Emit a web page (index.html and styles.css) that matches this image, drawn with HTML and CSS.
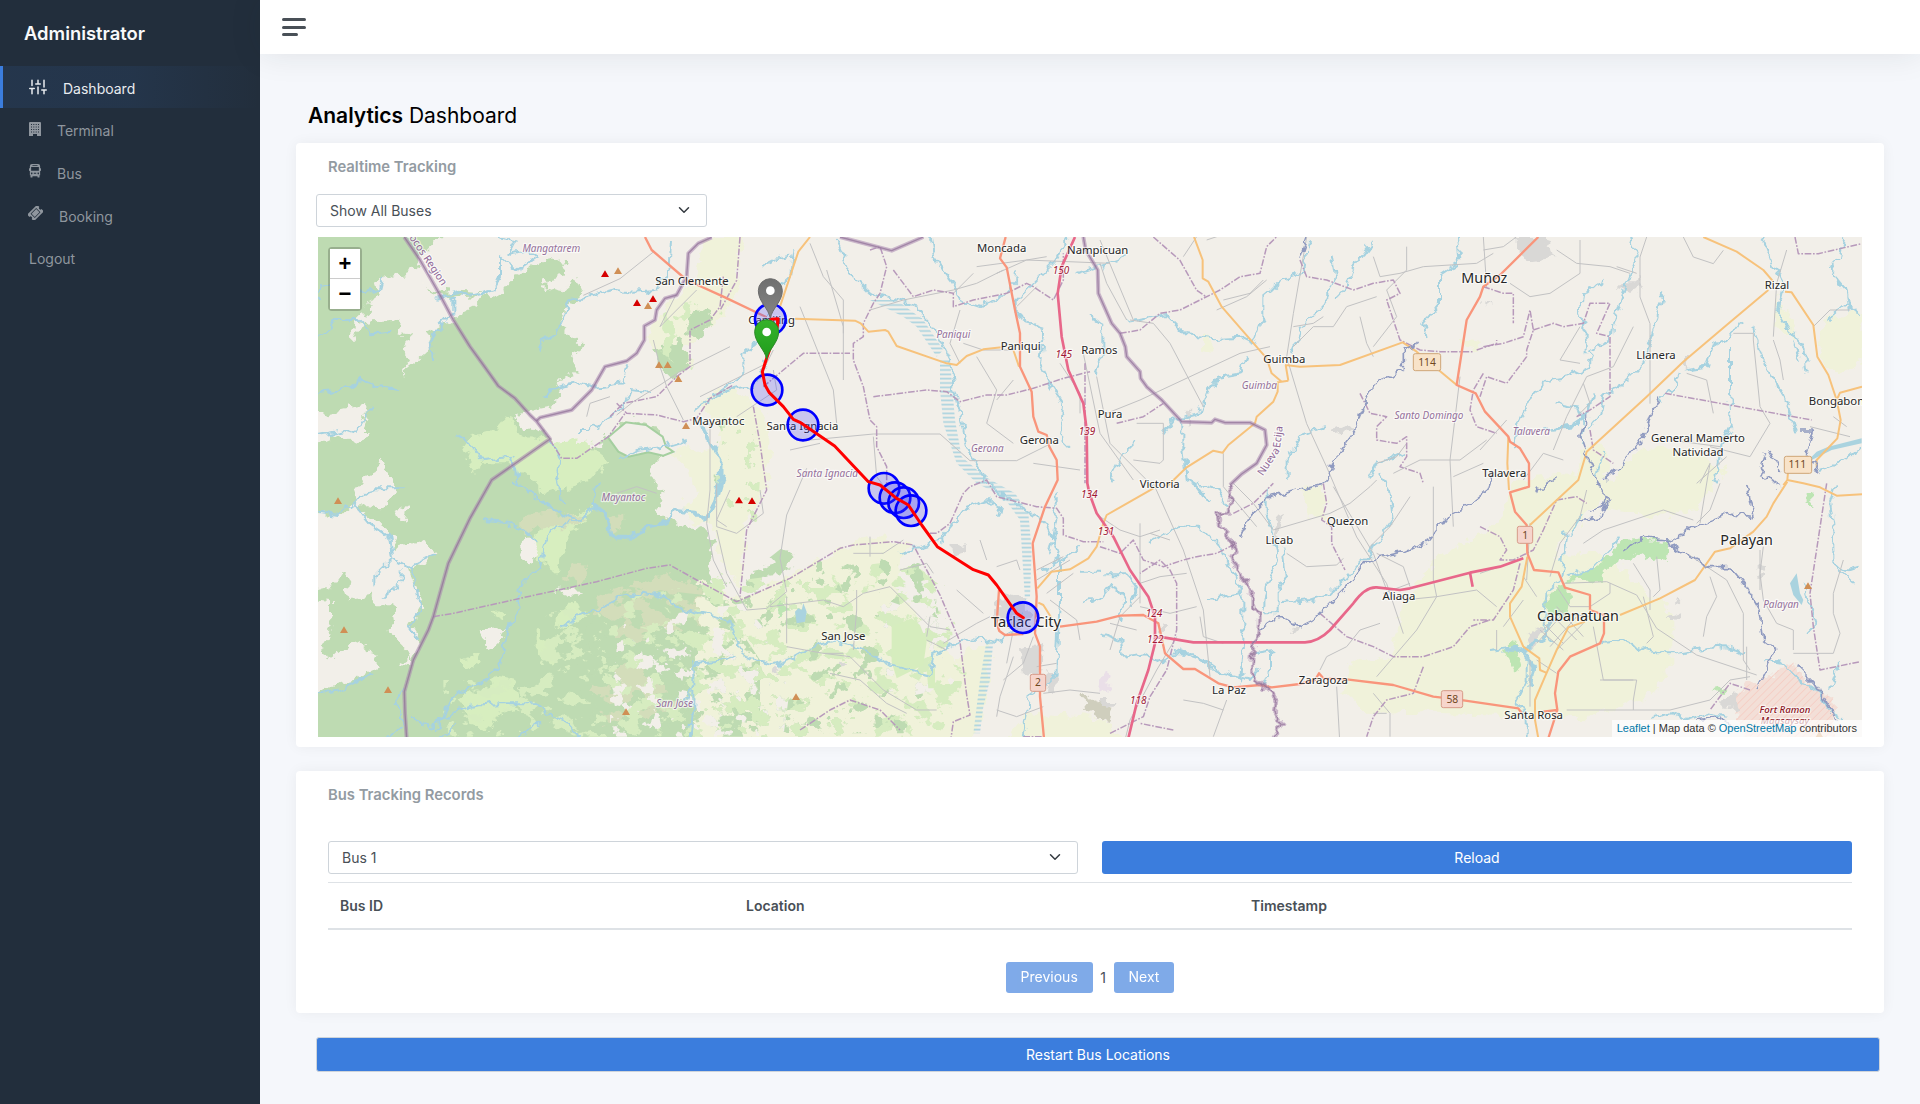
FILE: index.html
```html
<!DOCTYPE html>
<html lang="en">
<head>
<meta charset="utf-8">
<title>Analytics Dashboard</title>
<link rel="stylesheet" href="styles.css">
</head>
<body>
<div class="wrapper">
  <nav class="sidebar">
    <a class="brand">Administrator</a>
    <a class="side-link active"><svg class="ic-sliders" viewBox="0 0 24 24"><path d="M4 21v-7M4 10V3M12 21v-9M12 8V3M20 21v-5M20 12V3M1 14h6M9 8h6M17 16h6"/></svg><span>Dashboard</span></a>
    <a class="side-link terminal"><svg class="ic-fill" viewBox="0 0 12 14"><path fill-rule="evenodd" d="M1 0h10a1 1 0 0 1 1 1v13H8v-2H4v2H0V1a1 1 0 0 1 1-1zM2 2v1h1V2zm2.300 0v1h1V2zm2.400 0v1h1V2zM9 2v1h1V2zM2 4.500v1h1v-1zm2.300 0v1h1v-1zm2.400 0v1h1v-1zm2.300 0v1h1v-1zM2 7v1h1V7zm2.300 0v1h1V7zm2.400 0v1h1V7zM9 7v1h1V7zM2 9.500v1h1v-1zm2.300 0v1h1v-1zm2.400 0v1h1v-1zm2.300 0v1h1v-1z"/></svg><span>Terminal</span></a>
    <a class="side-link bus"><svg class="ic-fill" viewBox="0 0 14 15" preserveAspectRatio="none"><path fill-rule="evenodd" d="M3.500 0h7A2.500 2.500 0 0 1 13 2.500V4.500h.6a.4.4 0 0 1 .4.400v2a.6.600 0 0 1-1 .400V12h-.7v1.800a.7.700 0 0 1-.7.700h-1a.7.700 0 0 1-.7-.7V13H4.100v.8a.7.700 0 0 1-.7.700h-1a.7.700 0 0 1-.7-.7V12H1V7.300a.6.600 0 0 1-1-.4v-2a.4.400 0 0 1 .4-.4H1v-2A2.500 2.500 0 0 1 3.500 0zM4 1.300v.8h6v-.8zM2.500 3.300v4h9v-4zM3.200 9.200a.9.900 0 1 0 .01 0zM5.600 9.500v1h2.800v-1zM10.800 9.200a.9.900 0 1 0 .01 0z"/></svg><span>Bus</span></a>
    <a class="side-link booking"><svg class="ic-fill" viewBox="0 0 15 14"><g transform="rotate(-45 7.500 7)"><path fill-rule="evenodd" d="M.5 2.300h14v3.200a1.500 1.500 0 0 0 0 3v3.200H.5V8.500a1.500 1.500 0 0 0 0-3zM3.500 4v6h8V4zM4.200 4.700h6.600v4.600H4.200z"/></g></svg><span>Booking</span></a>
    <a class="side-link logout"><span>Logout</span></a>
  </nav>
  <div class="main">
    <header class="navbar"><div class="burger"><i></i><i></i><i></i></div></header>
    <main class="content">
      <h1><strong>Analytics</strong> Dashboard</h1>
      <section class="card map-card">
        <h2>Realtime Tracking</h2>
        <div class="select select-map"><span>Show All Buses</span><svg viewBox="0 0 16 16"><path d="M2 5l6 6 6-6"/></svg></div>
        <div class="map">
<svg class="tiles" viewBox="24 21 4632 1500">
<defs>
  <filter id="rough" filterUnits="userSpaceOnUse" x="0" y="0" width="4700" height="1540"><feTurbulence type="fractalNoise" baseFrequency=".03" numOctaves="3" seed="4"/><feDisplacementMap in="SourceGraphic" scale="48" xChannelSelector="R" yChannelSelector="G"/></filter>
  <filter id="wiggle" filterUnits="userSpaceOnUse" x="0" y="0" width="4700" height="1540"><feTurbulence type="fractalNoise" baseFrequency=".035" numOctaves="2" seed="9"/><feDisplacementMap in="SourceGraphic" scale="34" xChannelSelector="R" yChannelSelector="G"/></filter>
  <filter id="mixA" filterUnits="userSpaceOnUse" x="0" y="0" width="4700" height="1540" color-interpolation-filters="sRGB"><feTurbulence type="fractalNoise" baseFrequency=".013 .018" numOctaves="5" seed="3"/><feColorMatrix values="0 0 0 0 0 0 0 0 0 0 0 0 0 0 0 30 0 0 0 -15.200"/><feComposite in="SourceGraphic" operator="in"/></filter>
  <filter id="mixB" filterUnits="userSpaceOnUse" x="0" y="0" width="4700" height="1540" color-interpolation-filters="sRGB"><feTurbulence type="fractalNoise" baseFrequency=".016 .02" numOctaves="5" seed="21"/><feColorMatrix values="0 0 0 0 0 0 0 0 0 0 0 0 0 0 0 30 0 0 0 -17"/><feComposite in="SourceGraphic" operator="in"/></filter>
  <filter id="mixC" filterUnits="userSpaceOnUse" x="0" y="0" width="4700" height="1540" color-interpolation-filters="sRGB"><feTurbulence type="fractalNoise" baseFrequency=".02" numOctaves="4" seed="40"/><feColorMatrix values="0 0 0 0 0 0 0 0 0 0 0 0 0 0 0 30 0 0 0 -18.600"/><feComposite in="SourceGraphic" operator="in"/></filter>
  <pattern id="hatch" width="16" height="16" patternUnits="userSpaceOnUse" patternTransform="rotate(45)"><path d="M0 0v16" stroke="#f6c0b6" stroke-width="3"/></pattern>
  <pattern id="marsh" width="40" height="13" patternUnits="userSpaceOnUse"><path d="M0 4h40" stroke="#aad3df" stroke-width="5"/></pattern>
  <linearGradient id="gpin" x1="0" y1="0" x2="0" y2="1"><stop offset="0" stop-color="#6f6f6f"/><stop offset="1" stop-color="#858585"/></linearGradient>
  <linearGradient id="npin" x1="0" y1="0" x2="0" y2="1"><stop offset="0" stop-color="#36b22b"/><stop offset="1" stop-color="#1f9d1c"/></linearGradient>
  <path id="pin" d="M0 0C-5-30-36-50-36-83a36 36 0 0 1 72 0C36-50 5-30 0 0z"/>
  <g id="borders">
    <path d="M283 21L330 90 390 195 430 270 480 350 520 405 565 468 615 505 660 555 680 574 720 627 545 750 480 865 415 1000 370 1160 355 1200 310 1290 283 1385 285 1450 290 1525"/>
    <path d="M680 572L690 563 785 540 845 480 885 410 950 393 980 370 1003 330 1003 288 1035 270 1040 240 1065 205 1100 195 1130 140 1135 70 1165 40 1205 22"/>
    <path d="M1590 21L1745 62 1840 21"/>
    <path d="M2320 21L2327 60 2363 120 2365 190 2405 280 2430 310 2446 350 2450 380 2490 425 2492 445 2510 470 2555 510 2615 575 2705 578 2715 568 2745 578 2820 578 2865 600 2870 645 2840 700 2795 732 2760 765"/>
  </g>
  <path id="borderS" d="M2760 765L2765 790 2755 845 2725 850 2730 890 2770 940 2780 960 2770 990 2785 1020 2810 1070 2830 1090 2830 1135 2850 1150 2848 1210 2830 1250 2825 1320 2850 1360 2900 1405 2895 1450 2915 1480 2890 1525"/>
</defs>
<rect x="0" y="0" width="4700" height="1540" class="land"/>
<g filter="url(#rough)">
  <path class="forest" d="M0 0H410L330 80 300 150 370 180 500 190 560 200 600 150 680 100 750 85 770 100 760 140 700 150 700 175 745 190 800 145 820 190 770 230 750 290 800 330 820 350 780 380 800 430 740 450 760 490 720 530 670 540 610 560 640 600 690 580 720 630 755 685 800 685 895 620 950 570 1040 590 1060 640 1090 665 1040 690 1020 740 1060 790 1040 850 1090 880 1170 890 1210 930 1190 1020 1230 1080 1250 1540H0z"/>
  <path class="land" d="M200 150l90-25 30-15 30 70 70 20 100-5-20 35-70 35-30 20-40 20-10 60-80 70 30-50-20-20 20-40-40-10 10-40-30-5-60 5-30 10-15 50h-15l10-60 50-20-10-20 30-40-10-30zM0 560l160-35 20 15-30 60 40 0-60 40-50-25-80 35zM160 740l40-20 15-40 10 45 30 15-5 60-30 35-60-10-40 20zM0 845l100 5 30-30 70 60 45 30 15 50 90-30 30 40-30 30-50 20 20 60 20 40-40 70 30 50-20 50-20-30-30-30-30-20 25-40-5-50-50 0-20-20-60 10-10-30 10-50-30 0-10 30-80 20zM0 1110l60 10v40l5 40-35 60 40 30 30-30 50-30 20 40 40 10-20 40-90 40-100 30zM640 930l30-10 35 30-45 60-30-50zM515 1195l75-5-10 40-50 25zM250 850l50-30-10 60zM270 1300l30-20 10 30zM720 1075l110 5-50 20zM620 560l90-20 20 40-50 30zM720 110l-10 20zM940 1240l60-10 40 40-10 50-50 0z"/>
  <path class="scrub" d="M460 655l25-40 75-10 40-50 20 60 100 15 10 10 90-10 80 60-60 60-130 40-110-90-70 0-40 30zM690 900l160-70-70 100-40 100-50-40-20-75zM540 1150l50-5-10 25zM450 1290l60-20 10 20-50 30zM680 1200l30 40 30 60-20 10-40-60zM440 1400l100-30 20-30 50 10 20 80-60 20-20 50-60-20zM740 1150l60-40 20 60-80 30zM870 1320l20-10 10 30z"/>
  <path class="heath" d="M640 855l100-10 80 20-20 30-120 0-40 20zM780 1000l60 5-30 60-40-20zM890 860l50-15 0 45-40 20z"/>
  <path class="heath" d="M850 1100l220-70 180 80 0 80-150 10-80 50-60-20-90-30zM850 1350l100-50 80 30 80 90-60 60-80-20-90 30-20-70z"/>
  <path class="farm" d="M1185 21h115l-20 180-50 60-50 40-50 50 20 70-60-10-80-90 50-80 90-80zM1170 510l90-40 70 50 60 80-20 180-60 90-20 200-60-80-20-100-70-20-30-40 50-30-30-100-50-20 40-30 60 20 60-50zM1170 1050l110 60 240-110 150-85 130 30-30 60-10 60 60 80 40 90 50 20 40 60 0 40-30 40-20 140H1150z"/>
  <path class="farm" d="M1950 1270l90-30-10 150-40 140h-110zM2150 1450l200 10 150 80h-420zM3370 990l200-110 40-130 150-20 140 20-20 60-120 120-30 50 120-15 60 20 50 60 70 60 60 50 0 150-80 100-180 60-660-20-70-60 20-90 120-20 40-150zM4550 270l110-30v160l-80 30-40-40-15-70zM4000 650l140 10 100 60-80 120-100 20-160-20-30-60 60-60zM3820 650l60 0 20 60-40 50-60-10zM3460 330l60 5-10 30-55-10zM2670 320l40 10 0 40-40-10zM2980 770l60-5 10 100-60 0zM4395 200l30 20 40 90-20 20-50-50z"/>
  <path class="forest" d="M1140 250l50-20 20 40-50 60-30-20zM1030 350l90-20 20 60-50 60-40-40z"/>
</g>
<g>
  <path filter="url(#mixA)" fill="#bedbb2" d="M860 1060l370 40 60 100 60 90 0 230H840l-40-200z"/>
  <path filter="url(#mixB)" fill="#bedbb2" d="M1150 1370l180-60 200 30 80 60 90 20-10 100H1170zM1420 950l130 80 0 120-90 60-140-60 0-120z"/>
  <path filter="url(#mixB)" fill="#d6ecc0" d="M400 1350h260l50-200 420-80 660-80 120 80 60 260-80 190H400zM1190 1020h120l-10 100-60 10z"/>
  <path filter="url(#mixC)" fill="#bedbb2" d="M1200 570l160 50-30 290-110-40zM1250 1030l600-80 60 330-130 230h-580z"/>
  <path filter="url(#mixC)" fill="#d6ecc0" d="M1240 540l120 60-20 290-130-60zM1060 250l120-60 60 60-100 180-90-60z"/>
  <path filter="url(#mixC)" fill="#f2efe9" d="M900 1180l400-60 150 180-30 220-520 0zM1700 1100l200 70 40 200-200 40z"/>
  <path fill="#d6edbe" d="M1745 1190l60-25 25 20 20 50-10 70-80 40-15-50zM1850 1320l25-5 0 60-20 0z"/>
  <path d="M894 622l54-45 60 8 50 35 10 30 22 15-30 12-45-10-60 13-30-15z" fill="#f2efe9" stroke="#a5cfa0" stroke-width="6"/>
</g>
<g class="park" filter="url(#rough)">
  <path d="M3760 1050l130-50 30-65 70-10 90 15-10 50-35 5-50-25-60 20-60 60-100 5zM3710 1090l50-30 20 40-10 60-60-20zM3585 1250l30-10 20 70-20 10zM4490 780h20v45h-20zM4210 1380l40-10-30 30zM1405 1120l40 20-40 20z"/>
</g>
<path d="M4280 1380l90-40 80-43 40 60 80 50 5 120h-250l-50-60z" fill="#f3dfd7" filter="url(#rough)"/>
<path d="M4280 1380l90-40 80-43 40 60 80 50 5 120h-250l-50-60z" fill="url(#hatch)"/>
<g class="urban" filter="url(#rough)">
  <path d="M3620 21h100l-20 30 40 30-80 10-40-30zM3925 160h50l10-30 10 40-40 20-30-10zM4115 375l20 0-10 40-15-10zM2900 860l25-5-20 60-20 30zM3060 600l50-20 20 10-50 25zM2630 540l20 20-10 30zM2130 1250l50-10 20 30-10 60-50 10zM2210 1330l30 5-5 50-30 0zM2080 1080l60 20 20 70-50 30-60-30zM1925 950l40-10 0 30-40 10zM2550 1180l20 10-15 15zM4240 1400l40-10 10 40-50 10zM2370 1410l60 0-10 20-40 0zM4070 1165l50-20 0 15-40 20zM4100 1100l15 10-20 10zM3680 1190l30 10-40 60-20-20zM1385 1315l20 0-5 20zM1585 1290l30 20-20 10zM2945 1190l20-5 0 20-25 5zM4340 1010l30 5-10 20-20-5zM3520 210l40 20-40-5z"/>
  <path fill="#cfcebd" d="M2320 1395l90 40-10 50-75-45z"/>
  <path fill="#eadfe8" d="M2378 1328l30 10-15 50-30-10z"/>
</g>
<g class="lake">
  <path d="M1455 1145l10-10 10 5 5-20 10 25-5 30-25 5zM4440 1060l20-30 10 60 10 20-5 15-25-30zM4490 695l30-30 35-15 100-25v15l-90 20-60 30z"/>
  <path fill="url(#marsh)" d="M1680 210h80l80 60 60 90-20 20-60-90-40-30zM1890 390h30l15 180 20 110 70 60 90 50 40 60 10 110-5 140-15 10-15-240-50-70-80-40-60-60-40-120-10-100zM2030 1230h20l-10 120-20 80-10 80h-20l20-160z"/>
</g>
<g class="river" filter="url(#wiggle)">
  <path d="M220 140l-10 40-50 10-30-20-90-10-20 50M24 320l60-50 60 0 40 40 60-5M560 21l60 10-20 40 60-10 20 20-60 40-30-20-20-20 0 60-20 40-60 15-40-10-80 20M430 200l0 50-30 30-20 20-20 30 10 60M1080 30l-5 100-40 50-70 5-50-5-60 15-80 20-20 60-20 40-40 20-10 30M700 500l40-30 60-10 50 10 90-10 15-60M24 490l70-10 60-30 50 20 60 10M24 615l80-15 30 10 50-80M440 610l40 30 40 50 80-10 20 40 10 50M610 750l80 60 60 40 60 20 40-40 10-80M830 860l-60 20-50 20-20 50-10 60-60 60-10 80-30 50-10 60-10 50-60 50-40 10-60 50-10 50-40 20-60-30M720 630l30 50-10 60 20 80M810 600l30 0 60-40 40-30 20-50 60 5M930 690l50-30 80-10 65-20M24 845l60 10 50-40 60-40h90M130 822l50 60 60 40 10 60-60 60 0 30M250 985l50 30 20 60 10 70-30 50 25 40M275 1015l0 40-60 50M300 1010l80-40M24 1390l60-10 100-50M525 870l60 5 60 30 40 30M760 1190l40-30 60-20 80-40 60-15 60 10 40 40 100 20 60 20 20 60 30 50 80 20 60-20 70-40 60-10 80 20 80 50 120 30 10-60 60-30 60-20 60 10 60-30 30-60M370 1500l60-50 50-20 80-10 60 0 60 0 40 40 60 20 40 60M280 1370l-20 50 20 60-60 50-60 10M380 1540l60-60M600 1540l90-60M1130 1420l20-60 0-60 100-10 20-20M1150 1380l0 60-10 100"/>
  <path d="M1580 30l40 100 60 60 80 20 60 20 60 80 40 80 10 80 20 80 20 100 50 90 60 60 130 80 40 100 0 130-10 180 0 40-30 30-50 30-20 120-30 90M1860 21l10 60 60 80 20 50 60 20 50-20 60-60 0-30M1350 110l40-20 50-10M1450 60l-10 80-50 40-20 100-10 40-60 50 0 60-60 50-80 60M1390 330l-20 60-40 80-120 20M2270 30l-30 60-60 60-60 60 0 40 80 50-10 100 30 60 40 60-10 100 30 30M2300 130l60-20 90-30M2340 250l40 30 0 80-30 70M2400 750l40-80 40-40M1770 970l60-20 60-20 80-100 60-20 40 20-10 30M2200 1020l80-50 30-20M2310 1025h60M2240 780l0 90-20 100M2320 1120l60-20 30-40 30 50-10 60M2380 1030l70 0 30 40-20 60M2370 1210l60 20 10 50 60-10 60 30 30-40 90 30 60 40 80 20 30-40"/>
  <path d="M2450 275l120-20 60 60 80 10 80-5 40 20 30-80 0-60 60-50 60-20 20-100M2560 610l30-40 80-20 20-60 40-50 60-10 20-60M2945 370l40-90 60-60 30-80-10-60M3070 210l40-40 20-60 60-80M2930 750l0-60 40-70 80-30M2620 570l0 80 10 100 30 20 30 40M3440 21l10 80-60 40 0 80-50 60 10 40M3180 740l20-40 60-20 20-10"/>
  <path d="M3960 21l20 60-30 80-20 60-20 60-5 50-60 30-10 50-60 30-60 10-60 60-30 60-10 60 0 30M3880 150l-60 40-10 60 20 60 0 60M4060 190l-20 80-20 70-20 60-60 60-60 40-10 50-30 40M3740 520l60 10 20 60-10 50M4130 420l60-10 20-60 50-30 30-40M4110 430l-20 50-40 30M4260 360l0 120 5 100-30 60-10 60-10 60M4330 290l20 80 30 60 40 60 20 60 20 60M4360 21l30 80 30 60-20 80 40 60 40 50 10 80M4450 340l20 50M4550 270l60-50 40 30M4600 21l-10 60-30 40 50 60 10 60M4530 720l60-20 60-50M3880 660l-20 80M4580 760l-20 60 10 60 0 120 60 60M4570 1000l40 20 30-10M4480 1060l20 60 20 60-30 30"/>
  <path d="M2870 770l0 80 20 60 10 80-30 80-10 70M2920 950l10 80-30 60 0 60-40 0M2910 1120l90-10 60-20 60-60 60-60 30-50 40-60-10-80-30-50M2660 760l60 20 30 50M2520 940l90-50 60 0 60 60 50 100 20 60 0 120-10 130M2700 1110l90-20M2590 1270l60 0 60 50 80 20 10-10M2830 1270l60-10M2880 1260l0 60-20 50M3770 910l-10 60-10 80-40 30-10 120 20 30M3770 1040l70-20 60-60 20-40M3880 1240l60-10 40 20 60 20 60 0 60-10 60-10 60 10 20 10M3540 1260l80-10 30 40 0 60-30 60 30 60 0 70M4030 1460l60-10 40 20 60-20 60 10M4360 1290l60 10 40 40 60 40 40 60 30 20M4590 1290l-20 60-10 30M3820 850l-20 30-20 40"/>
</g>
<g class="river wide" filter="url(#wiggle)"><path d="M845 820l50 40 10 60 60 0 60-30 40-10 30-40 60 5 30 30 30-60 20-70 0-60-40-50-20-60M3700 600l80-10 60-40 10-60M3730 1160l-30 70-60 30-60 0M3640 1260l30 50-10 60"/></g>
<g class="minor">
  <path d="M1030 66l-100 80-110 50M1260 350l-90 45-60 30-60 40-80 50-50 40M1030 330l20 80 20 60 50 100M1100 190l-50 100 60-60 50-50M1200 580l0 200-10 100 20 110 40 80M830 560l10-40 60-20M1260 780l-40 90 30 20M920 790l60-20 60 20M1470 230l100 250 10 100M1500 40l40 100 60 70 0 100M1550 120l50 170 0 160M1170 500l200-100 20-40M1280 560l120-80-10-60M1680 240l100-30 150-30 70-20 80-40M1500 630l190-18h200l90 80 140 0 100-50M1690 620l10 120 30 40M1530 640l-90 20M1950 240l-30 100 30 60M2000 380l60 100-30 100 80 60M2110 450l-50 60M1990 130l-60 60M2000 110l150-20 250 10M2250 400l60 90 0 60M2370 30l100 240M2320 370l50 240 100 140M2170 700l140 20M1960 340l60 20 90 0M2060 130l90-40 60-10M2180 170l-60 60M2370 100l20 60 60 110M2460 270l70 10 50 60 100 190M2390 550l100-40 300-140 90-20M2690 30l60-20M2660 20l-40 60M2990 21l-40 230-20 130 60 200 60 130 90 210 90 140 50 150M2470 690l80 10 10-10 0-110-80 0M2360 440l40 200 130 130M2740 670l0 100 100 120M2720 240l90-40 60-50M2740 210l80-20 40-40M2950 290l60-10 30-20M2950 350l60-60 60 0 40-60 90-30M3190 80l20 60 60-10 70-20 160-10 50-30M3290 50l0 70-60 60 30 80-70 90M3150 260l20 80 20 40M3450 440l-30 250 10 200M3250 730l80-40 120 0 80-60M3200 700l60-20 30-40M3520 21l10 150M3520 700l-90 40"/>
  <path d="M3520 60l60-10 40-30M3740 60l60 40 100 10 60 20M4010 21l-20 60 0 120 30 80 0 240M3600 160l60 40 60-10 90-60 0-100M3920 110l60 20M3970 290l-60 120-80 30-60 120-40 100M3810 290l-60 100 60 10M3800 560l40-40-20-60M4120 21l30 60 60 20 30-40M4430 60l-30 100-10 160M4270 310l60 0 0 20 20 200 30 50-60 100-120-30M4130 430l60 20 20 100M4080 630l150 20M4200 700l-30 180M4250 680l-90 80M3640 750l60-80 60 20M3510 660l80-90M4510 290l50-50 60 0M4390 330l20 60 10 60M4200 700l-30 60M4500 590l120 30M4570 560l40 30M3660 880l-10 170M3830 780l-20 80-60 80-30 100M4150 870l-90-30-180 60-60 40M4230 760l-30 80-40 40M4360 950l-10 80 10 80 40 70 50 20 0 60M4130 970l120 80 50 100 0 140 20 30M4350 960l0 120M3760 1060l130-5 90 40 60 100 120 80 180 60M3970 1000l50 80 0 60M4040 980l10 100-20 20M4000 1100l30 120-20 20M4200 1040l20 60-30 60-10 60M4310 1250l0 100M4450 1270l120 0 20-60-20-60 0-60 30-100M3770 1440h310l120-30 60-60 60-10M3850 1190l30 160 90 0M3870 1350l110 0-10 60 0 30M3680 1290l60 40M3700 1200l60-60M3680 1240l80-90 80 10M3720 1250l80-90M3740 1260l80-80M3700 1180l60 60M3720 1150l80 80M3740 1130l80 90M3690 1200l70 60M3740 1070l40 60 60 0M3840 1130l60-40 0-30M3640 1110l-60 80M3640 1040l40 60M3510 1030l60-20M3560 1200l0 60M3660 1290l0 140"/>
  <path d="M2530 760l90 200 60 180 20 200M2770 760l60 60 60 80 170-50 60-30 60-50 20-20M3070 770l60 100 60 100 40 110M3300 800l-60 90-60 60M3370 770l0 280 10 50-60 100-120 140M3200 970l80 40 20 60M3280 1110l100-10 120-20 60 50M3210 1180l-60 20-40 50-60 30-20 40M3080 1370l10 180M3190 1390l50 60 0 70M3190 1450l40 0M2370 860l60 40 60 20 60-20M2490 880l0 240M2490 1060l60-20 80-10M2490 1130l90 20 80-20M2520 910l60 20M2400 1260l30-100 60-60M2750 1410l-40 110M2620 1410l60 10 60 20M2600 1220l-60 100-80 150-20 80M2400 1180l80 20M2670 1160l10 60 60 20M2930 970l60 40 90-5 20-20M3300 1060l-80 30"/>
  <path d="M1220 760l0 130 60 20 80-60-10-70M1220 900l30 130 60 110 60-5 60-50-20-100 20-130 60-140M1380 1130l160-20 60 20 60-40 80-20 60 60 60 60 60 10M1430 1250l110 20 60 0M1430 1100l0 140M1540 1270l80 10 100 100 100 60 60 0M1640 1080l0 60-10 120M1850 1230l60 30M1860 1160l-10 60M1630 970l90 0 60-40M1680 920l0 60M1770 1020l80-20 20 30M1940 1080l80 70M2060 1010l60-20 10 30M2010 930l20 60M2180 1020l80-40M2180 1050l100-60M2210 1090l80-60M2220 1110l80 60 10 60M2110 1280l-40 120-10 60M2080 1350l60-50M2060 1440l60 20 80-30M2200 1390l80-10 90 10M2180 1310l60-10M2170 1220l-30 80M2110 1200l-20 100M1900 1240l100-60 40-20M1560 1330l90 20 80 70 60 30"/>
</g>
<g class="admin">
  <path d="M1240 140l-10 90-30 40-60 30 0 110-40 30-60 60-100 20-40 40M920 520l30 30 90 5 80 20 40-10 40-60 70-40M720 630l35 55 45 0 95-65 50-70M370 1160l60-10 200-45 230-50 150-40 70-10 80 45 120 65 160-70 150-90 40-10 120-10 60 10 80 150 60 140 20 160 10 60-50 20-20 140M1330 530l20 110 20 140-60 120-20 200M1290 21l-10 130-50 90M1680 60l30-10 20 60-20 80-20 30-30 60 0 40-30 20 0 50 30 80 20 100 20 20 0 60 30 60 0 60M1360 470l60-50 60-50h140M1690 500l160-20 60 5 40 30 80-20 60 0 80-20 90-30 80-20M1750 120l60 80 60-20 60 10 0 40 60-20 100-20 60-30 20 10 60 40 30-60 0-80M1860 910l20 0 40-30 40-90 20-20 50-20 30 50 120 30 60 5 20 30 0 50 60 20 60 0M2370 950l60 20 40-40 30 60 60 20 60-20 40-10 60-10 60-30M2325 400l0 360M2420 580l80-20 60-40M2530 21l80 70 50 90 30 20M2430 310l60-10 60-50 60-10 60-30 60-30 60-40 60-10 20-80 40-40M2970 90l20 50 60 10 80 30 60-20 60-10 20 40-40 20 20 60 20 60 60 30 60 5 100 0M3150 490l30 60 50 10-30 30 0 40 60 10 30-20 0 60-20 30 60 20 10 30M3500 360l60-20 0-10M3520 430l-30 50-10 60 20 50 60 20"/>
  <path d="M3520 170l60 20 30 0 0 90M3520 350l60-10 60-20 20-80 10 60-20 60 0 20-60 80-60-20-20 60M3670 300l60-20 30 10 60-10 20-60 60 0-40 90 40 10 0 180-60 40-40 20M4065 490l440 80M4455 21l10 50 60 0 130-30M3840 600l10 60 60 40M3510 890l60 30 20 40-20 30 40 0 60-30 30-60 40-90 60-10 30 20M3630 1000l-20 80-40 60-20 30-60 0M4550 760l-50 330 10 100 20 130 120-25M4320 1380l-60-20-60 80M3030 1150l80 70 80 30 60 30 90 0 90-30 50-60 60-20M3340 1310l-30 80-80 20-40 50-20 60M3040 760l10 60-15 50 30 20 0 50 40 80M2770 850l60-30 60-60M2590 1500l-100-20M2400 1510l100-50 20-60 50-80 30-120 0-140-20-40-30-30-60 40M1470 1500l90-60 60-30 90 30 60 60M2140 1520l60 0"/>
</g>
<g class="secondary">
  <path d="M1500 21L1465 65 1410 230M1455 266L1635 272 1652 280 1675 305 1725 300 1735 305 1760 348 1910 400 1940 405 1970 378 2020 358 2075 352M2110 360L2127 410M2652 21L2678 90 2678 145 2695 155 2735 230 2870 385 2885 430 2915 455M2935 452L2903 457 2903 485 2890 515 2840 560 2835 580 2755 645 2738 668 2710 662 2630 712 2570 770M2530 775L2390 855 2380 880 2360 950 2335 985 2280 1018 2225 1025 2182 1075M2925 405L2970 410 3090 405 3278 337 3320 365 3440 465M2927 405L2935 452M4180 21L4280 65 4360 120 4390 155M4375 180L4250 285 4120 395 4010 500 3830 665 3805 750 3660 885M4425 185L4445 187 4510 285 4522 380 4555 435 4580 510 4592 570 4582 625 4520 690 4520 712M4580 510L4590 488 4656 470M4420 765L4432 750 4435 715M4432 750L4480 760 4530 772 4580 797 4656 793M4432 755L4390 820 4370 860 4330 905 4260 955 4215 965 4155 1050 4050 1105 3930 1155M3652 980L3635 1070 3600 1120 3600 1160 3640 1250 3688 1285 3690 1320 3708 1328M3825 1175L3775 1192 3740 1260 3705 1340 3675 1410 3675 1470 3685 1525M3595 620L3592 700 3597 780M2185 1118L2200 1125 2225 1165"/>
</g>
<g class="primary">
  <path d="M1005 21L1025 60 1130 150 1240 200 1370 262M2087 21L2070 85 2090 112 2115 240 2130 310 2130 410 2165 485 2170 560 2185 605 2210 615 2218 650 2240 690 2243 750 2205 830 2168 940 2180 1100 2175 1210 2190 1250 2190 1400 2202 1525M2067 1080L2060 1180 2068 1203 2085 1215 2140 1212M2250 1190L2360 1175 2430 1157 2500 1155 2545 1180 2565 1270 2620 1317 2655 1317 2725 1360 2770 1372 2850 1365 2885 1372 2970 1362 3015 1350 3027 1330 3040 1345 3110 1348 3250 1365 3370 1400 3440 1408 3625 1435 3635 1450M3685 21L3570 135 3520 170 3510 200 3470 270 3440 465 3497 490 3525 545 3595 620 3600 635 3630 655 3657 700 3657 770 3600 787 3615 845 3650 885 3652 970 3672 1020 3745 1027 3765 1073 3840 1095 3840 1140 3882 1155 3882 1210 3870 1240 3780 1280 3745 1325 3735 1390 3742 1440 3715 1525M3700 1445L3742 1440"/>
</g>
<g class="motorway">
  <path d="M2295 21L2255 110 2243 190 2255 320 2275 420 2320 520 2330 600 2332 760 2338 790 2360 850 2410 920 2460 1020 2515 1100 2535 1160 2535 1240 2515 1320 2480 1420 2455 1525M2540 1222L2560 1222 2650 1237H2985Q3025 1235 3060 1200L3130 1120Q3165 1070 3200 1072L3270 1080 3300 1075 3480 1028 3570 1010 3640 985M3480 1028L3488 1070"/>
</g>
<g class="border-wide"><use href="#borders"/></g><g class="border-line"><use href="#borders"/></g>
<g filter="url(#wiggle)"><use href="#borderS" class="border-wide"/><use href="#borderS" class="border-line"/></g>
<g class="border-river" filter="url(#wiggle)"><path d="M2990 21l-20 60M3320 340l-40 20 0 60-70 30-30 40-30 60-20 60-60 80-20 70-80 20-90 20-60 60-30 60M2850 1200l60-40 60 30 40-20 60-60 60-60 40-60 130-30 60-30 60-80 60-30 50-40 20-60M3680 780l60-40M3830 560l-20 60 20 60 30 70 40 70-60 30M3810 870l60-10 20-60M4050 500l-30 60-20 60-60 80-60 50M4310 760l20 100-70-10-110 40-60 40-90-10-60 40M4060 930l60 40 80 40 60 0 50 60 40 70 10 90 40 30-30 60-30 60M4160 1470l60-10 50 30M4470 600l40 0-20 70 40 60M4370 670l-20 60 60 40M4380 660l30 60M4460 1310l50 50 40 60 30 50"/></g>
<g class="peaks">
  <path fill="#d08f55" d="M924 112l12 20h-24zM1014 217l12 20h-24zM1047 394l12 20h-24zM1073 394l12 20h-24zM1105 436l12 20h-24zM1128 577l12 20h-24zM84 802l12 20h-24zM102 1189l12 20h-24zM234 1369l12 20h-24zM948 1435l12 20h-24zM1458 1390l12 20h-24zM4494 1057l12 20h-24zM4528 1503l12 20h-24z"/>
  <path fill="#d60000" d="M885 121l12 20h-24zM981 208l12 20h-24zM1029 196l12 20h-24zM1287 800l12 20h-24zM1326 802l12 20h-24z"/>
</g>
<g class="shields">
  <rect x="3310" y="371" width="82" height="51" rx="6" class="sh-o"/><text x="3351" y="407">114</text>
  <rect x="4423" y="679" width="82" height="51" rx="6" class="sh-o"/><text x="4462" y="715">111</text>
  <rect x="2161" y="1333" width="46" height="51" rx="6" class="sh-r"/><text x="2184" y="1369">2</text>
  <rect x="3394" y="1382" width="64" height="51" rx="6" class="sh-r"/><text x="3427" y="1419">58</text>
  <rect x="3622" y="889" width="46" height="51" rx="6" class="sh-r"/><text x="3646" y="926">1</text>
</g>
<g class="lbl">
  <text x="1146" y="164">San Clemente</text><text x="1225" y="585">Mayantoc</text><text x="2075" y="66">Moncada</text><text x="2363" y="73">Nampicuan</text><text x="1385" y="281">Camiling</text><text x="2132" y="361">Paniqui</text><text x="2368" y="372">Ramos</text><text x="2400" y="564">Pura</text><text x="2188" y="641">Gerona</text><text x="1477" y="599">Santa Ignacia</text><text x="2549" y="774">Victoria</text><text x="2923" y="398">Guimba</text><text x="3583" y="742">Talavera</text><text x="4038" y="388">Llanera</text><text x="4401" y="178">Rizal</text><text x="4164" y="637">General Mamerto</text><text x="4164" y="679">Natividad</text><text x="4590" y="526">Bongabong</text><text x="1600" y="1230">San Jose</text><text x="2908" y="942">Licab</text><text x="3113" y="884">Quezon</text><text x="3267" y="1111">Aliaga</text><text x="3040" y="1363">Zaragoza</text><text x="2757" y="1391">La Paz</text><text x="3671" y="1467">Santa Rosa</text>
</g>
<g class="lbl big"><text x="3523" y="159">Muñoz</text><text x="2148" y="1192" class="wide-name">Tarlac City</text><text x="4310" y="944">Palayan</text><text x="3804" y="1172">Cabanatuan</text></g>
<g class="lbl muni"><text x="724" y="66">Mangatarem</text><text x="1930" y="323">Paniqui</text><text x="2032" y="666">Gerona</text><text x="1552" y="741">Santa Ignacia</text><text x="2848" y="477">Guimba</text><text x="3357" y="566">Santo Domingo</text><text x="3664" y="614">Talavera</text><text x="940" y="812">Mayantoc</text><text x="1094" y="1430">San Jose</text><text x="4413" y="1135">Palayan</text></g>
<g class="lbl region"><text transform="translate(341 88) rotate(56)">Ilocos Region</text><text transform="translate(2884 700) rotate(-56)">Nueva</text><text transform="translate(2914 622) rotate(-83)">Ecija</text></g>
<g class="lbl exit"><text x="2253" y="133">150</text><text x="2261" y="385">145</text><text x="2331" y="614">139</text><text x="2338" y="805">134</text><text x="2388" y="915">131</text><text x="2532" y="1160">124</text><text x="2536" y="1239">122</text><text x="2485" y="1422">118</text></g>
<g class="lbl fort"><text x="4425" y="1448">Fort Ramon</text><text x="4425" y="1483">Magsaysay</text></g>
<g class="stops"><circle cx="1381" cy="268" r="46"/><circle cx="1371" cy="480" r="46"/><circle cx="1479" cy="585" r="46"/><circle cx="1722" cy="775" r="46"/><circle cx="1755" cy="803" r="46"/><circle cx="1781" cy="818" r="46"/><circle cx="1803" cy="842" r="46"/><circle cx="2139" cy="1163" r="46"/></g>
<path class="route" d="M1382 268L1404 266 1402 290 1370 385 1357 425 1365 465 1378 488 1420 530 1450 568 1470 577 1574 648 1675 755 1710 765 1760 805 1795 825 1835 885 1882 950 1990 1019 2035 1035 2060 1065 2120 1150 2140 1163"/>
<g><use href="#pin" x="1381" y="265" fill="url(#gpin)" stroke="#6c6c6c" stroke-width="3"/><circle cx="1381" cy="182" r="13" fill="#fff"/><use href="#pin" x="1370" y="388" fill="url(#npin)" stroke="#2b8727" stroke-width="3"/><circle cx="1370" cy="306" r="13" fill="#fff"/></g>
</svg>
          <div class="zoom"><a>+</a><a>−</a></div>
          <div class="attribution"><a>Leaflet</a> | Map data © <a>OpenStreetMap</a> contributors</div>
        </div>
      </section>
      <section class="card records">
        <h2>Bus Tracking Records</h2>
        <div class="controls">
          <div class="select"><span>Bus 1</span><svg viewBox="0 0 16 16"><path d="M2 5l6 6 6-6"/></svg></div>
          <button class="btn">Reload</button>
        </div>
        <table><thead><tr><th class="c1">Bus ID</th><th class="c2">Location</th><th>Timestamp</th></tr></thead></table>
        <div class="pager"><button class="btn off">Previous</button><span>1</span><button class="btn off">Next</button></div>
      </section>
      <button class="btn restart">Restart Bus Locations</button>
    </main>
  </div>
</div>
</body>
</html>
```
FILE: styles.css
```css
*{box-sizing:border-box}
body{margin:0;font-family:Inter,"Liberation Sans",sans-serif;font-size:14px;line-height:21px;color:#495057;background:#f5f7fb}
.wrapper{display:flex;height:1104px;overflow:hidden}
.sidebar{width:260px;flex:none;background:#222e3c;display:flex;flex-direction:column}
.brand{height:66px;padding:19px 24px 0;font-size:18.400px;line-height:28px;font-weight:600;color:#f8f9fa}
.side-link{display:flex;align-items:center;height:43px;padding-left:29px;color:#8f969e}
.side-link span{padding-top:2px}
.side-link.active{height:42px;padding-left:26px;border-left:3px solid #3b7ddd;color:#e9ecef;background:linear-gradient(90deg,rgba(59,125,221,.1),rgba(59,125,221,.09) 50%,transparent)}
.side-link svg{display:block;flex:none}
.ic-sliders{width:18px;height:18px;margin-right:16px;fill:none;stroke:currentColor;stroke-width:2;stroke-linecap:round}
.ic-fill{fill:currentColor}
.terminal .ic-fill{width:12px;height:14px;margin:-1px 16px 0 0}
.side-link.terminal{height:42px}
.side-link.bus{height:44px}
.bus .ic-fill{width:12px;height:14px;margin:-2px 16px 0 0}
.booking .ic-fill{width:15px;height:14px;margin:-5px 16px 0 -1px}
.side-link.logout{height:41px}
.main{flex:1;display:flex;flex-direction:column;min-width:0}
.navbar{height:54px;flex:none;background:#fff;box-shadow:0 0 32px rgba(33,37,41,.1);padding:18px 22px}
.burger{display:flex;flex-direction:column;gap:5px}
.burger i{width:24px;height:3px;border-radius:2px;background:#495057}
.burger i:last-child{width:16px;margin-top:-1px}
.content{padding:49px 36px 0;display:flex;flex-direction:column}
h1{margin:0 0 15px 12px;font-size:21px;line-height:25px;font-weight:400;color:#000;letter-spacing:-.02px}
h1 strong{font-weight:600}
.card{background:#fff;border-radius:4px;box-shadow:0 0 14px rgba(33,37,41,.05)}
h2{margin:0;font-size:14.800px;line-height:18px;font-weight:600;color:#939ba2}
.map-card{height:604px;margin-bottom:24px;padding:15px 22px 0}
.map-card h2{padding-left:10px}
.select{display:flex;align-items:center;justify-content:space-between;height:33px;border:1px solid #ced4da;border-radius:3px;padding:0 13px 1px;background:#fff}
.select svg{width:16px;height:12px;fill:none;stroke:#343a40;stroke-width:2;stroke-linecap:round;stroke-linejoin:round;margin-right:1px}
.select-map{width:391px;margin:18px 0 10px -2px}
.map{position:relative;height:500px;overflow:hidden}
.tiles{display:block;width:1544px;height:500px}
.zoom{position:absolute;left:10px;top:10px;width:34px;border:2px solid rgba(0,0,0,.2);border-radius:4px;background-clip:padding-box}
.zoom a{display:block;height:30px;background:#fff;color:#000;font:bold 22px/30px "Liberation Sans",sans-serif;text-align:center}
.zoom a:first-child{border-bottom:1px solid #ccc}
.attribution{position:absolute;right:0;bottom:0;height:17px;padding:0 5px;background:rgba(255,255,255,.7);font:11px/17px "Liberation Sans",sans-serif;color:#333;white-space:nowrap}
.attribution a{color:#0078a8}
.records{height:242px;margin-bottom:24px;padding:15px 32px 0}
.controls{display:grid;grid-template-columns:1fr 1fr;gap:24px;margin-top:37px}
.btn{height:33px;border:0;border-radius:3px;background:#3b7ddd;color:#fff;font:14px/21px Inter,"Liberation Sans",sans-serif;padding:0 15px 1px}
table{width:100%;margin-top:8px;border-collapse:collapse;table-layout:fixed;border-top:1px solid #dee2e6}
th{height:46px;padding:1px 12px 0;text-align:left;font-weight:600;border-bottom:2px solid #dee2e6}
.c1{width:406px}.c2{width:505px}
.pager{display:flex;justify-content:center;align-items:center;gap:7.500px;margin-top:32px}
.off{height:31px;opacity:.65}
.restart{height:35px;margin:0 4px 0 20px;border:1px solid #ced4da;border-radius:3px}

.land{fill:#f2efe9}.forest{fill:#bedbb2}.scrub{fill:#d7eebf}.heath{fill:#d3ddba}.farm{fill:#f0f2da}
.park{fill:#bde5b3}.urban{fill:#d9d8d6}.lake{fill:#aad3df}
.river,.minor,.admin,.secondary,.primary,.motorway,.border-wide,.border-line,.border-river{fill:none;stroke-linejoin:round}
.river{stroke:#a6d2e0;stroke-width:6}
.wide{stroke-width:11}
.minor{stroke:#c2c2c3;stroke-width:3}
.admin{stroke:#b799bb;stroke-width:4.500;stroke-dasharray:20 5 5 5}
.secondary{stroke:#f7c27b;stroke-width:6}
.primary{stroke:#f9957b;stroke-width:7}
.motorway{stroke:#e8678a;stroke-width:8}
.border-wide{stroke:#a885ae;stroke-opacity:.55;stroke-width:12}
.border-line{stroke:#8c6b94;stroke-opacity:.65;stroke-width:4}
.border-river{stroke:#8f9ac0;stroke-width:5}
.lbl text,.shields text{font-family:"Noto Sans","Liberation Sans",sans-serif;text-anchor:middle}
.lbl text{font-size:34px;fill:#262626;stroke:#fff;stroke-opacity:.65;stroke-width:7;stroke-linejoin:round;paint-order:stroke}
.big text{font-size:43px}
.big .wide-name{font-size:44px}
.muni text{font-size:30px;font-style:italic;fill:#95719b}
.region text{font-size:31px;fill:#8e6696}
.exit text{font-size:30px;font-style:italic;fill:#a01835}
.fort text{font-size:29px;font-style:italic;font-weight:500;fill:#8c1626}
.shields text{font-size:31px;fill:#70471f}
.sh-o{fill:#f8e3c9;stroke:#cfa678;stroke-width:3}
.sh-r{fill:#f6d5cc;stroke:#d79a88;stroke-width:3}
.stops{fill:#33f;fill-opacity:.22;stroke:#00f;stroke-width:8}
.route{fill:none;stroke:#f00;stroke-width:9;stroke-linejoin:round;stroke-linecap:round}
```
